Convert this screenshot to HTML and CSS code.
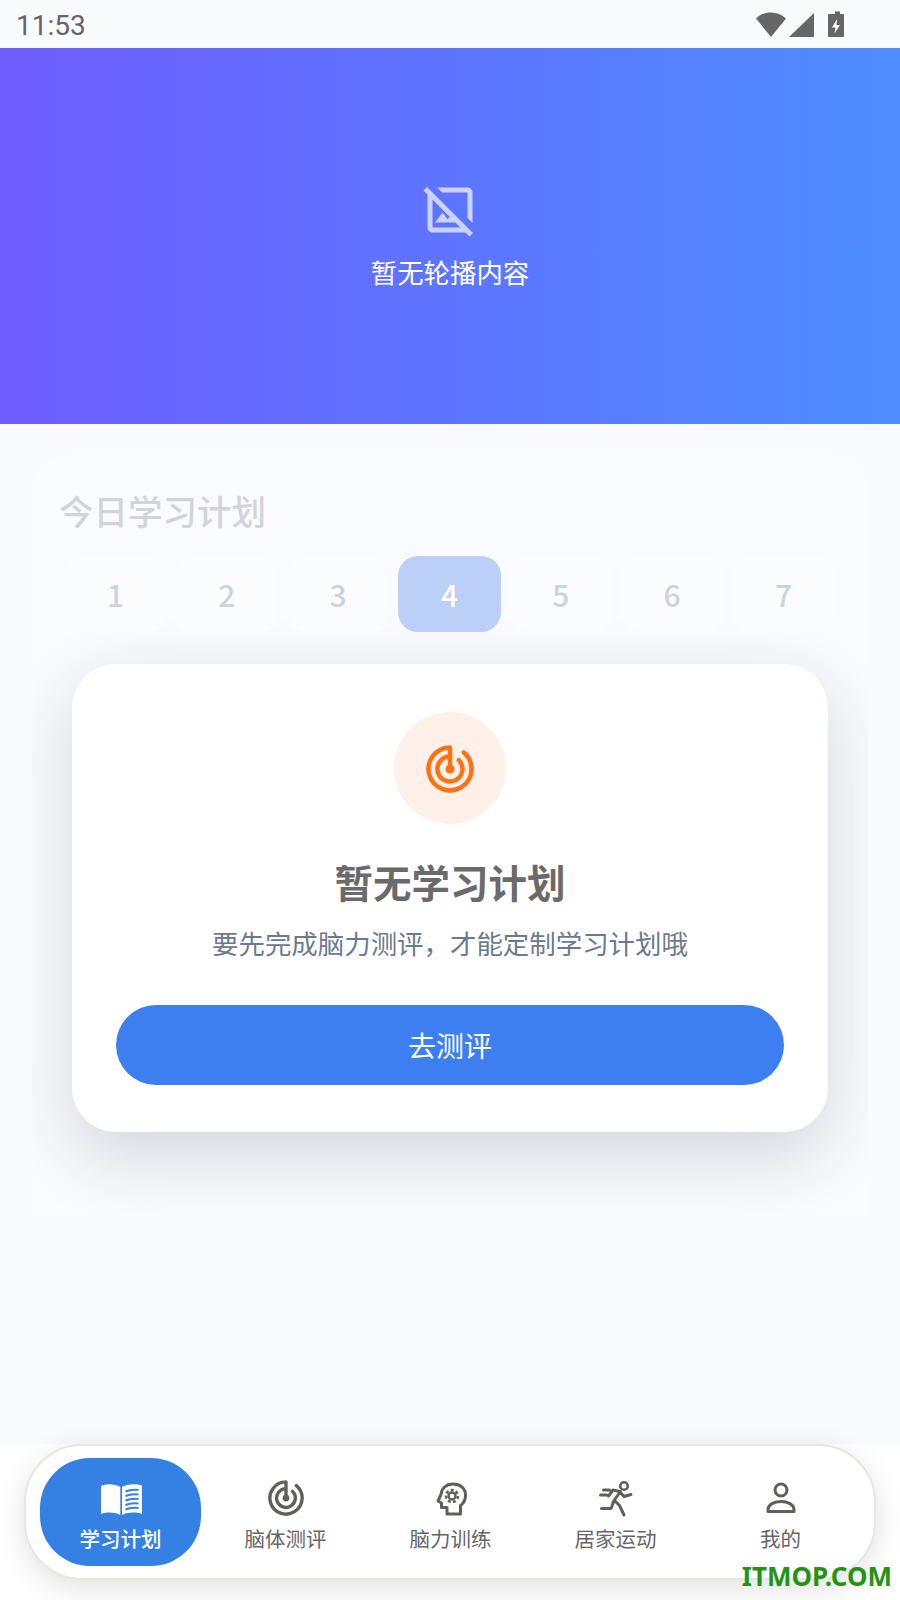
FILE: index.html
```html
<!DOCTYPE html>
<html lang="zh-CN">
<head>
<meta charset="utf-8">
<title>今日学习计划</title>
<link rel="stylesheet" href="styles.css">
</head>
<body>
<svg class="defs" width="0" height="0" aria-hidden="true">
  <symbol id="radar" viewBox="0 0 48 48">
    <path d="M24 2.5A21.5 21.5 0 1 0 37.8 7.5M24 11.5A12.5 12.5 0 1 0 32.8 15.2M24 2.5V24" fill="none" stroke="currentColor" stroke-width="4.500" stroke-linecap="round"/>
    <circle cx="24" cy="24" r="4.500" fill="currentColor"/>
  </symbol>
</svg>
<div class="page">
  <header class="status">
    <span class="time">11:53</span>
    <svg class="status-icons" width="100" height="30" viewBox="0 0 100 30">
      <path d="M1 7.5C9 -0.5 23 -0.5 31 7.5L16 26Z" fill="#666"/>
      <path d="M34 26 59 2V26Z" fill="#666"/>
      <path d="M77 3H80V0.5H85V3H88A1 1 0 0 1 89 4V25A1 1 0 0 1 88 26H74A1 1 0 0 1 73 25V4A1 1 0 0 1 74 3Z" fill="#666"/>
      <path d="M82 8 77 16.5H80.5L79.5 22.5 85 14H81.5Z" fill="#fff"/>
    </svg>
  </header>

  <section class="hero">
    <svg class="hero-icon" viewBox="0 0 24 24"><path d="M19 5v10.17l2 2V5c0-1.1-.9-2-2-2H6.83l2 2H19zM2.81 2.81 1.39 4.22 3 5.83V19c0 1.1.9 2 2 2h13.17l1.61 1.61 1.41-1.41L2.81 2.81zM5 19V7.83l6.84 6.84-.84 1.05L9 13l-3 4h8.17l2 2H5z"/></svg>
    <p class="hero-text">暂无轮播内容</p>
  </section>

  <main class="main">
    <section class="panel">
      <h2 class="panel-title">今日学习计划</h2>
      <div class="days">
        <div class="day">1</div>
        <div class="day">2</div>
        <div class="day">3</div>
        <div class="day day-active">4</div>
        <div class="day">5</div>
        <div class="day">6</div>
        <div class="day">7</div>
      </div>
      <div class="card">
        <div class="card-badge"><svg class="card-icon"><use href="#radar"/></svg></div>
        <h3 class="card-title">暂无学习计划</h3>
        <p class="card-sub">要先完成脑力测评，才能定制学习计划哦</p>
        <div class="card-btn">去测评</div>
      </div>
    </section>
  </main>

  <footer class="footer">
    <nav class="nav">
      <div class="nav-item nav-item-active">
        <svg class="nav-icon" viewBox="0 0 50 50">
          <path d="M5 14C11 11.500 18 11.500 24.300 15V43C18 40 11 40 5 42Z" fill="#fff"/>
          <path d="M26 15C32 11.500 40 11.500 46 13.500V42C40 40 32 40 26 43Z" fill="#fff"/>
          <path d="M29.500 19.500C33 18 38 17.500 42.500 18M29.500 24C33 22.500 38 22 42.500 22.500M29.500 28.500C33 27 38 26.500 42.500 27M29.500 33C33 31.500 38 31 42.500 31.500M29.500 37.500C33 36 38 35.500 42.500 36" fill="none" stroke="#3580e3" stroke-width="2"/>
        </svg>
        <span class="nav-label">学习计划</span>
      </div>
      <div class="nav-item">
        <svg class="nav-icon"><use href="#radar" x="7" y="8" width="36" height="36"/></svg>
        <span class="nav-label">脑体测评</span>
      </div>
      <div class="nav-item">
        <svg class="nav-icon" viewBox="0 0 50 50" fill="none" stroke="#5f5f5b">
          <path d="M34.500 42V33.500C38 31 39.500 27 39.500 23C39.500 16 34 12 27 12C20 12 15.500 16.500 15 22.500L12 29L15.500 31V35.500H21V42Z" stroke-width="3" stroke-linejoin="round"/>
          <circle cx="26" cy="24" r="3.500" stroke-width="2.500"/>
          <circle cx="26" cy="24" r="6" stroke-width="2.500" stroke-dasharray="3 2.240"/>
        </svg>
        <span class="nav-label">脑力训练</span>
      </div>
      <div class="nav-item">
        <svg class="nav-icon" viewBox="0 0 50 50" fill="none" stroke="#5f5f5b" stroke-width="3" stroke-linecap="round" stroke-linejoin="round">
          <circle cx="33" cy="14" r="3.800" stroke-width="2.600"/>
          <path d="M29.500 19.500 22 30M28.500 19.500 33 24.500 40 22.500M28.500 19.500 22 18 17.500 24M24 29 28.500 33.500 33 43M22.500 30 20 36.500H10.500M12.500 18H18.500M9.500 23H15.500"/>
        </svg>
        <span class="nav-label">居家运动</span>
      </div>
      <div class="nav-item">
        <svg class="nav-icon" viewBox="0 0 50 50" fill="none" stroke="#5f5f5b" stroke-width="3">
          <circle cx="25" cy="18" r="6"/>
          <path d="M12 39.500V37.500C12 32.500 18.500 29.500 25 29.500S38 32.500 38 37.500V39.500Z" stroke-linejoin="round"/>
        </svg>
        <span class="nav-label">我的</span>
      </div>
    </nav>
    <span class="watermark">ITMOP.COM</span>
  </footer>
</div>
</body>
</html>
```
FILE: styles.css
```css
* { box-sizing: border-box; }
html, body { margin: 0; padding: 0; }
body {
  width: 900px;
  height: 1600px;
  overflow: hidden;
  background: #f8fafd;
  font-family: "Noto Sans CJK SC", "Noto Sans", sans-serif;
}
.defs { position: absolute; }
h2, h3, p { margin: 0; }

.page {
  width: 900px;
  height: 1600px;
  display: flex;
  flex-direction: column;
}

.status {
  height: 48px;
  flex: none;
  display: flex;
  justify-content: space-between;
  align-items: center;
  padding: 3px 0 0 16px;
  background: #f9fafc;
}
.time {
  font-family: Roboto, sans-serif;
  font-size: 28px;
  line-height: 45px;
  color: #666;
}
.status-icons { margin: 0 45px 0 0; flex: none; }

.hero {
  height: 376px;
  flex: none;
  display: flex;
  flex-direction: column;
  align-items: center;
  padding-top: 132px;
  background: linear-gradient(90deg, #6e5cff 0%, #4d8dff 100%);
}
.hero-icon {
  width: 60px;
  height: 60px;
  flex: none;
  fill: rgba(255, 255, 255, .68);
  margin-left: -1px;
}
.hero-text {
  margin-top: 13px;
  font-size: 26.4px;
  line-height: 38px;
  color: #fff;
}

.main {
  flex: 1;
  padding: 31px 32px 0;
  background: #f8fafd;
}
.panel {
  height: 760px;
  overflow: hidden;
  border-radius: 40px 40px 0 0;
  background: #f9fbfe;
}
.panel-title {
  margin: 31px 0 22px 27px;
  font-size: 34.5px;
  line-height: 48px;
  font-weight: 500;
  color: #d2d4d8;
}
.days {
  display: flex;
  gap: 8.33px;
  margin: 0 33px 0 32px;
}
.day {
  flex: 1;
  height: 76px;
  display: flex;
  align-items: center;
  justify-content: center;
  border-radius: 20px;
  background: #fbfcfd;
  font-size: 30px;
  font-weight: 500;
  color: #cdd3dc;
}
.day-active {
  background: #bbcff7;
  color: #fff;
}

.card {
  margin: 32px 40px 0;
  padding: 48px 44px 47px;
  height: 468px;
  display: flex;
  flex-direction: column;
  align-items: center;
  border-radius: 44px;
  background: #fff;
  box-shadow: 0 24px 70px rgba(40, 45, 60, .18);
}
.card-badge {
  width: 112px;
  height: 112px;
  flex: none;
  display: flex;
  align-items: center;
  justify-content: center;
  padding-top: 1px;
  border-radius: 50%;
  background: #fff1e9;
}
.card-icon {
  width: 48px;
  height: 48px;
  color: #ff7214;
}
.card-title {
  margin-top: 30px;
  font-size: 38.5px;
  line-height: 54px;
  font-weight: 700;
  color: #6a6a6a;
}
.card-sub {
  margin-top: 17px;
  font-size: 26.45px;
  line-height: 36px;
  color: #6b7a90;
}
.card-btn {
  margin-top: 44px;
  width: 100%;
  height: 80px;
  display: flex;
  align-items: center;
  justify-content: center;
  border-radius: 40px;
  background: #3d7ef0;
  font-size: 28px;
  color: #fff;
}

.footer {
  position: relative;
  height: 156px;
  flex: none;
  padding: 0 24px;
  background: #fff;
}
.nav {
  height: 136px;
  display: flex;
  gap: 4px;
  padding: 12px 14px 11px;
  border: 2px solid #e8e6e0;
  border-radius: 58px;
  background: #fff;
  box-shadow: 0 8px 30px rgba(0, 0, 0, .12);
}
.nav-item {
  width: 161px;
  height: 108px;
  flex: none;
  display: flex;
  flex-direction: column;
  align-items: center;
  padding-top: 14px;
  border-radius: 50px;
}
.nav-item-active { background: #3580e3; }
.nav-icon {
  width: 50px;
  height: 50px;
  flex: none;
  color: #5f5f5b;
}
.nav-label {
  margin-top: 3px;
  font-size: 20.5px;
  line-height: 27px;
  color: #666;
}
.nav-item-active .nav-label {
  color: #fff;
  font-weight: 500;
}

.watermark {
  position: absolute;
  right: 8px;
  bottom: 8px;
  font-family: "Noto Sans", sans-serif;
  font-size: 26px;
  line-height: 32px;
  font-weight: 700;
  color: #229411;
}
```
